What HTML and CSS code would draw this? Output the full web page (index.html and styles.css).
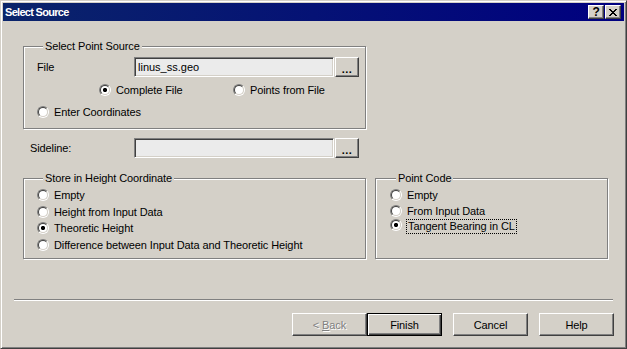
FILE: index.html
```html
<!DOCTYPE html>
<html lang="en">
  <head>
    <meta charset="utf-8" />
    <title>Select Source</title>
    <link rel="stylesheet" href="styles.css">
  </head>

  <body>
    <div class="window">
      <div class="titlebar">
        <span class="title">Select Source</span>
        <span class="caption-btn help">?</span>
        <span class="caption-btn close">
          <svg width="8" height="7" viewBox="0 0 8 7" shape-rendering="crispEdges">
            <path d="M0 0h2v1h-2zM6 0h2v1h-2zM1 1h2v1h-2zM5 1h2v1h-2zM2 2h4v1h-4zM3 3h2v1h-2zM2 4h4v1h-4zM1 5h2v1h-2zM5 5h2v1h-2zM0 6h2v1h-2zM6 6h2v1h-2z" fill="#000"/>
          </svg>
        </span>
      </div>

      <div class="client">
        <div class="group source">
          <div class="caption">Select Point Source</div>
          <div class="field file-row">
            <span class="field-label">File</span>
            <span class="edit">linus_ss.geo</span>
            <span class="btn browse">...</span>
          </div>
          <div class="radio-row mode">
            <span class="opt wide"><span class="radio on"></span>Complete File</span>
            <span class="opt"><span class="radio"></span>Points from File</span>
          </div>
          <div class="radio-row manual">
            <span class="opt"><span class="radio"></span>Enter Coordinates</span>
          </div>
        </div>

        <div class="field sideline">
          <span class="field-label">Sideline:</span>
          <span class="edit"></span>
          <span class="btn browse">...</span>
        </div>

        <div class="groups">
          <div class="group height">
            <div class="caption">Store in Height Coordinate</div>
            <div class="options">
              <span class="opt"><span class="radio"></span>Empty</span>
              <span class="opt"><span class="radio"></span>Height from Input Data</span>
              <span class="opt"><span class="radio on"></span>Theoretic Height</span>
              <span class="opt"><span class="radio"></span>Difference between Input Data and Theoretic Height</span>
            </div>
          </div>
          <div class="group code">
            <div class="caption">Point Code</div>
            <div class="options">
              <span class="opt"><span class="radio"></span>Empty</span>
              <span class="opt"><span class="radio"></span>From Input Data</span>
              <span class="opt focused"><span class="radio on"></span><span class="focus">Tangent Bearing in CL</span></span>
            </div>
          </div>
        </div>

        <div class="separator"></div>

        <div class="buttons">
          <span class="btn push disabled">&lt; <u>B</u>ack</span>
          <span class="btn push default">Finish</span>
          <span class="btn push spaced">Cancel</span>
          <span class="btn push spaced">Help</span>
        </div>
      </div>
    </div>
  </body>
</html>
```

FILE: styles.css
```css
/* Window frame */

html,
body {
  margin: 0;
  background: #d4d0c8;
}

.window {
  width: 627px;
  height: 349px;
  box-sizing: border-box;
  border: 1px solid;
  border-color: #d4d0c8 #404040 #404040 #d4d0c8;
  box-shadow: inset 1px 1px #fff, inset -1px -1px #808080;
  padding: 2px;
  background: #d4d0c8;
  font: 11px "Liberation Sans", Arial, sans-serif;
  letter-spacing: -0.1px;
  color: #000;
}

.titlebar {
  height: 18px;
  display: flex;
  align-items: center;
  padding: 0 3px 0 2px;
  background: linear-gradient(to right, #0a246a, #000080);
  color: #fff;
}

.title {
  flex: 1;
  font-weight: bold;
  letter-spacing: -0.7px;
}

.caption-btn {
  width: 16px;
  height: 14px;
  box-sizing: border-box;
  border: 1px solid;
  border-color: #fff #404040 #404040 #fff;
  box-shadow: inset -1px -1px #808080;
  background: #d4d0c8;
  color: #000;
  display: flex;
  align-items: center;
  justify-content: center;
}

.caption-btn.help {
  margin-right: 1px;
  font-weight: bold;
  font-size: 12px;
  line-height: 12px;
}

/* Client area */

.client {
  padding-left: 20px;
}

.group {
  box-sizing: border-box;
  border: 1px solid #808080;
  box-shadow: inset 1px 1px #fff, 1px 1px #fff;
}

.caption {
  width: fit-content;
  margin: -7px 0 0 6px;
  padding: 0 2px;
  line-height: 13px;
  background: #d4d0c8;
}

.source {
  width: 343px;
  height: 83px;
  margin-top: 25px;
  padding-left: 13px;
}

.field {
  display: flex;
  align-items: center;
  height: 20px;
}

.file-row {
  margin-top: 4px;
}

.field-label {
  width: 97px;
}

.sideline {
  margin-top: 9px;
  padding-left: 7px;
}

.sideline .field-label {
  width: 104px;
}

.edit {
  width: 200px;
  height: 20px;
  box-sizing: border-box;
  margin-right: 1px;
  padding: 0 3px;
  border: 1px solid;
  border-color: #808080 #fff #fff #808080;
  box-shadow: inset 1px 1px #404040, inset -1px -1px #d4d0c8;
  background: #ebebeb;
  line-height: 18px;
  letter-spacing: 0;
}

/* Buttons */

.btn {
  box-sizing: border-box;
  border: 1px solid;
  border-color: #fff #404040 #404040 #fff;
  box-shadow: inset -1px -1px #808080;
  background: #d4d0c8;
  display: flex;
  align-items: center;
  justify-content: center;
}

.browse {
  width: 24px;
  height: 20px;
  font-weight: bold;
  letter-spacing: 0.5px;
  padding-top: 3px;
}

.push {
  width: 75px;
  height: 23px;
}

.push.default {
  border: 1px solid #000;
  box-shadow: inset 1px 1px #fff, inset -1px -1px #404040, inset -2px -2px #808080;
}

.push.disabled {
  color: #808080;
  text-shadow: 1px 1px #fff;
  white-space: pre;
}

.push.spaced {
  margin-left: 11px;
}

/* Radio buttons */

.radio-row {
  display: flex;
}

.mode {
  margin-top: 7px;
  padding-left: 62px;
}

.mode .wide {
  width: 134px;
}

.manual {
  margin-top: 9px;
}

.opt {
  display: flex;
  align-items: flex-start;
  gap: 5px;
  height: 13px;
  line-height: 13px;
  white-space: nowrap;
}

.radio {
  width: 12px;
  height: 12px;
  box-sizing: border-box;
  flex: none;
  border-radius: 50%;
  border: 1px solid;
  border-color: #808080 #fff #fff #808080;
}

.radio::before {
  content: "";
  display: block;
  height: 10px;
  box-sizing: border-box;
  border-radius: 50%;
  border: 1px solid;
  border-color: #404040 #d4d0c8 #d4d0c8 #404040;
  background: #fff;
}

.radio.on::before {
  background: radial-gradient(circle, #000 1.8px, #fff 2.4px);
}

/* Lower groups */

.groups {
  display: flex;
  align-items: flex-start;
  margin-top: 20px;
}

.groups .group {
  height: 81px;
}

.height {
  width: 343px;
  padding-left: 13px;
}

.code {
  width: 233px;
  margin-left: 9px;
  padding-left: 14px;
}

.options {
  display: flex;
  flex-direction: column;
  margin-top: 4px;
}

.height .options {
  gap: 3.5px;
}

.code .options {
  gap: 3px;
}

.code .focused {
  margin-top: -2px;
  height: 15px;
  gap: 4px;
}

.focus {
  border: 1px dotted #000;
  padding: 0 1px;
  line-height: 13px;
}

.separator {
  width: 599px;
  margin: 40px 0 0 -9px;
  border-top: 1px solid #808080;
  border-bottom: 1px solid #fff;
}

.buttons {
  display: flex;
  justify-content: flex-end;
  margin-top: 12px;
  padding-right: 10px;
}
```
